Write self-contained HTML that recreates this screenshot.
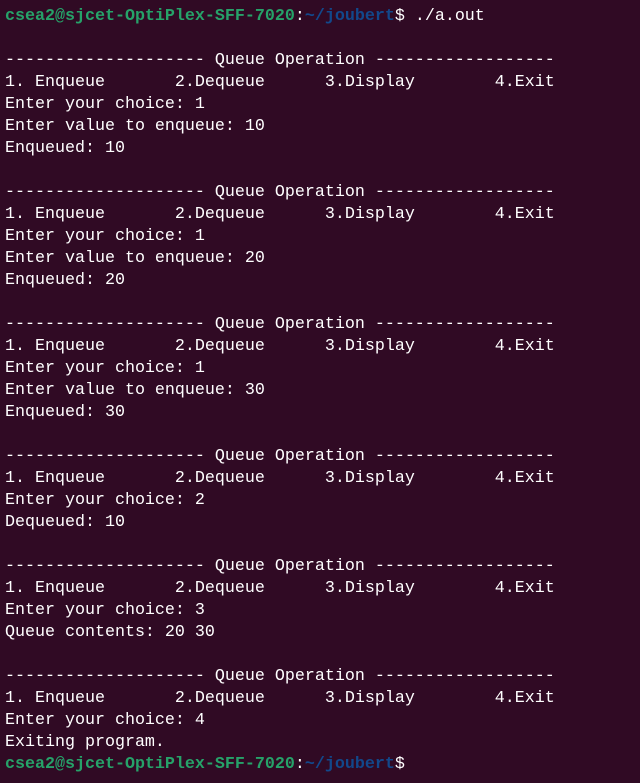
<!DOCTYPE html>
<html><head><style>
html,body{margin:0;padding:0;background:#300a24;width:640px;height:783px;overflow:hidden}
pre{margin:0;position:absolute;left:5px;top:6px;font-family:"Liberation Mono","DejaVu Sans Mono",monospace;font-size:16.67px;line-height:22px;color:#ffffff}
.g{color:#26a269;font-weight:bold}.b{color:#12488b;font-weight:bold}
</style></head><body><pre><span class="g">csea2@sjcet-OptiPlex-SFF-7020</span>:<span class="b">~/joubert</span>$ ./a.out

-------------------- Queue Operation ------------------
1. Enqueue       2.Dequeue      3.Display        4.Exit
Enter your choice: 1
Enter value to enqueue: 10
Enqueued: 10

-------------------- Queue Operation ------------------
1. Enqueue       2.Dequeue      3.Display        4.Exit
Enter your choice: 1
Enter value to enqueue: 20
Enqueued: 20

-------------------- Queue Operation ------------------
1. Enqueue       2.Dequeue      3.Display        4.Exit
Enter your choice: 1
Enter value to enqueue: 30
Enqueued: 30

-------------------- Queue Operation ------------------
1. Enqueue       2.Dequeue      3.Display        4.Exit
Enter your choice: 2
Dequeued: 10

-------------------- Queue Operation ------------------
1. Enqueue       2.Dequeue      3.Display        4.Exit
Enter your choice: 3
Queue contents: 20 30

-------------------- Queue Operation ------------------
1. Enqueue       2.Dequeue      3.Display        4.Exit
Enter your choice: 4
Exiting program.
<span class="g">csea2@sjcet-OptiPlex-SFF-7020</span>:<span class="b">~/joubert</span>$</pre></body></html>
